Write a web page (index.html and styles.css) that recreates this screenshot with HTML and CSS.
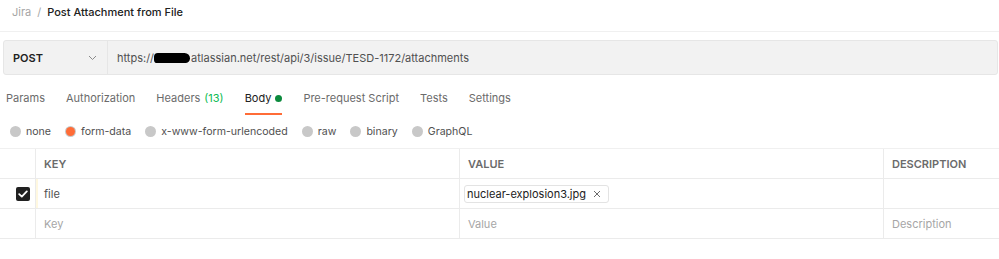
FILE: index.html
```html
<!DOCTYPE html>
<html lang="en">
  <head>
    <meta charset="UTF-8" />
    <meta name="viewport" content="width=device-width, initial-scale=1.0" />
    <title>Post Attachment from File</title>
    <link rel="stylesheet" href="styles.css">
  </head>
  <body>
    <!-- Breadcrumb header -->
    <div class="header">
      <span class="crumb">Jira</span>
      <span class="sep">/</span>
      <span class="title">Post Attachment from File</span>
    </div>

    <!-- Request bar -->
    <div class="request-bar">
      <div class="method">
        <span>POST</span>
        <svg class="chevron" width="9" height="6" viewBox="0 0 9 6">
          <path d="M1 1l3.5 3.5L8 1" fill="none" stroke="#8a8a8a" stroke-width="1" />
        </svg>
      </div>
      <div class="url">
        https://<span class="redacted"></span>atlassian.net/rest/api/3/issue/TESD-1172/attachments
      </div>
    </div>

    <!-- Tabs -->
    <div class="tabs">
      <a href="#" class="tab">Params</a>
      <a href="#" class="tab">Authorization</a>
      <a href="#" class="tab">Headers <span class="count">(13)</span></a>
      <a href="#" class="tab active">Body <span class="dot"></span></a>
      <a href="#" class="tab">Pre-request Script</a>
      <a href="#" class="tab">Tests</a>
      <a href="#" class="tab">Settings</a>
    </div>

    <!-- Body types -->
    <div class="body-types">
      <label class="radio"><span class="circle"></span>none</label>
      <label class="radio"><span class="circle checked"></span>form-data</label>
      <label class="radio"><span class="circle"></span>x-www-form-urlencoded</label>
      <label class="radio"><span class="circle"></span>raw</label>
      <label class="radio"><span class="circle"></span>binary</label>
      <label class="radio"><span class="circle"></span>GraphQL</label>
    </div>

    <!-- Form data table -->
    <div class="table">
      <div class="row head">
        <div class="cell check"></div>
        <div class="cell key">KEY</div>
        <div class="cell value">VALUE</div>
        <div class="cell desc">DESCRIPTION</div>
      </div>
      <div class="row">
        <div class="cell check">
          <span class="checkbox">
            <svg width="10" height="8" viewBox="0 0 10 8">
              <path d="M1.2 4.2l2.6 2.4L8.8 1.4" fill="none" stroke="#fff" stroke-width="1.8" stroke-linecap="round" stroke-linejoin="round" />
            </svg>
          </span>
        </div>
        <div class="cell key marked">file</div>
        <div class="cell value">
          <span class="chip">
            nuclear-explosion3.jpg
            <svg class="close" width="8" height="8" viewBox="0 0 8 8">
              <path d="M1 1l6 6M7 1L1 7" stroke="#6b6b6b" stroke-width="1" />
            </svg>
          </span>
        </div>
        <div class="cell desc"></div>
      </div>
      <div class="row">
        <div class="cell check"></div>
        <div class="cell key placeholder">Key</div>
        <div class="cell value placeholder">Value</div>
        <div class="cell desc placeholder">Description</div>
      </div>
    </div>
  </body>
</html>
```

FILE: styles.css
```css
body {
  margin: 0;
  font-family: Inter, "Noto Sans", sans-serif;
  font-size: 11px;
  color: #212121;
  background-color: #fff;
}

/* Header */
.header {
  height: 32px;
  padding: 0 12px 8px;
  display: flex;
  align-items: center;
  gap: 6px;
  border-bottom: 1px solid #f0f0f0;
  box-sizing: border-box;
}

.header .crumb,
.header .sep {
  color: #a6a6a6;
}

.header .title {
  color: #212121;
  font-weight: 500;
}

/* Request bar */
.request-bar {
  margin: 8px 1px 0 3px;
  height: 35px;
  display: flex;
  background-color: #f2f2f2;
  border: 1px solid #e6e6e6;
  border-radius: 3px;
  box-sizing: border-box;
}

.method {
  width: 104px;
  padding: 0 10px 0 9px;
  box-sizing: border-box;
  display: flex;
  align-items: center;
  justify-content: space-between;
  font-weight: 600;
  border-right: 1px solid #e6e6e6;
}

.url {
  padding-left: 9px;
  display: flex;
  align-items: center;
  color: #505050;
}

.redacted {
  display: inline-block;
  width: 36px;
  height: 10px;
  background-color: #000;
  border-radius: 5px 7px 6px 4px;
  margin-right: 1px;
}

/* Tabs */
.tabs {
  margin-top: 8px;
  display: flex;
  padding-left: 6px;
  gap: 21px;
}

.tab {
  padding: 8px 0;
  color: #6b6b6b;
  text-decoration: none;
  display: flex;
  align-items: center;
  gap: 4px;
  border-bottom: 2px solid transparent;
}

.tab .count {
  color: #0cbb52;
}

.tab.active {
  color: #212121;
  border-bottom-color: #ff6c37;
}

.tab .dot {
  width: 7px;
  height: 7px;
  border-radius: 50%;
  background-color: #0b8a3d;
}

/* Body types */
.body-types {
  display: flex;
  padding: 7px 0 0 10px;
  gap: 14px;
  height: 25px;
  box-sizing: border-box;
}

.radio {
  display: flex;
  align-items: center;
  gap: 5px;
  color: #505050;
  font-size: 10.6px;
}

.circle {
  width: 11px;
  height: 11px;
  border-radius: 50%;
  background-color: #c8c8c8;
}

.circle.checked {
  background-color: #ff6c37;
  box-shadow: 0 0 0 1px #c8c8c8;
  width: 9px;
  height: 9px;
  margin: 0 1px;
}

/* Table */
.table {
  margin-top: 8px;
  border-top: 1px solid #f0f0f0;
}

.row {
  display: grid;
  grid-template-columns: 35px 424px 424px 1fr;
  height: 30px;
  box-sizing: border-box;
  border-bottom: 1px solid #ebebeb;
}

.cell {
  display: flex;
  align-items: center;
  padding-left: 8px;
  border-left: 1px solid #ebebeb;
  color: #505050;
}

.cell.check {
  border-left: none;
  justify-content: flex-end;
  padding: 0 5px 0 0;
}

.cell.marked {
  box-shadow: inset 2px 0 0 #fff8e0;
}

.row.head .cell {
  font-weight: 600;
  color: #6b6b6b;
}

.placeholder {
  color: #a6a6a6;
}

.checkbox {
  width: 14px;
  height: 14px;
  border-radius: 2px;
  background-color: #212121;
  display: flex;
  align-items: center;
  justify-content: center;
}

.cell.value {
  padding-left: 4px;
}

.cell.value.placeholder,
.row.head .cell.value {
  padding-left: 8px;
}

.chip {
  display: inline-flex;
  align-items: center;
  gap: 7px;
  height: 18px;
  padding: 0 7px 0 2px;
  border: 1px solid #e3e3e3;
  border-radius: 3px;
  color: #212121;
  box-sizing: border-box;
}
```
